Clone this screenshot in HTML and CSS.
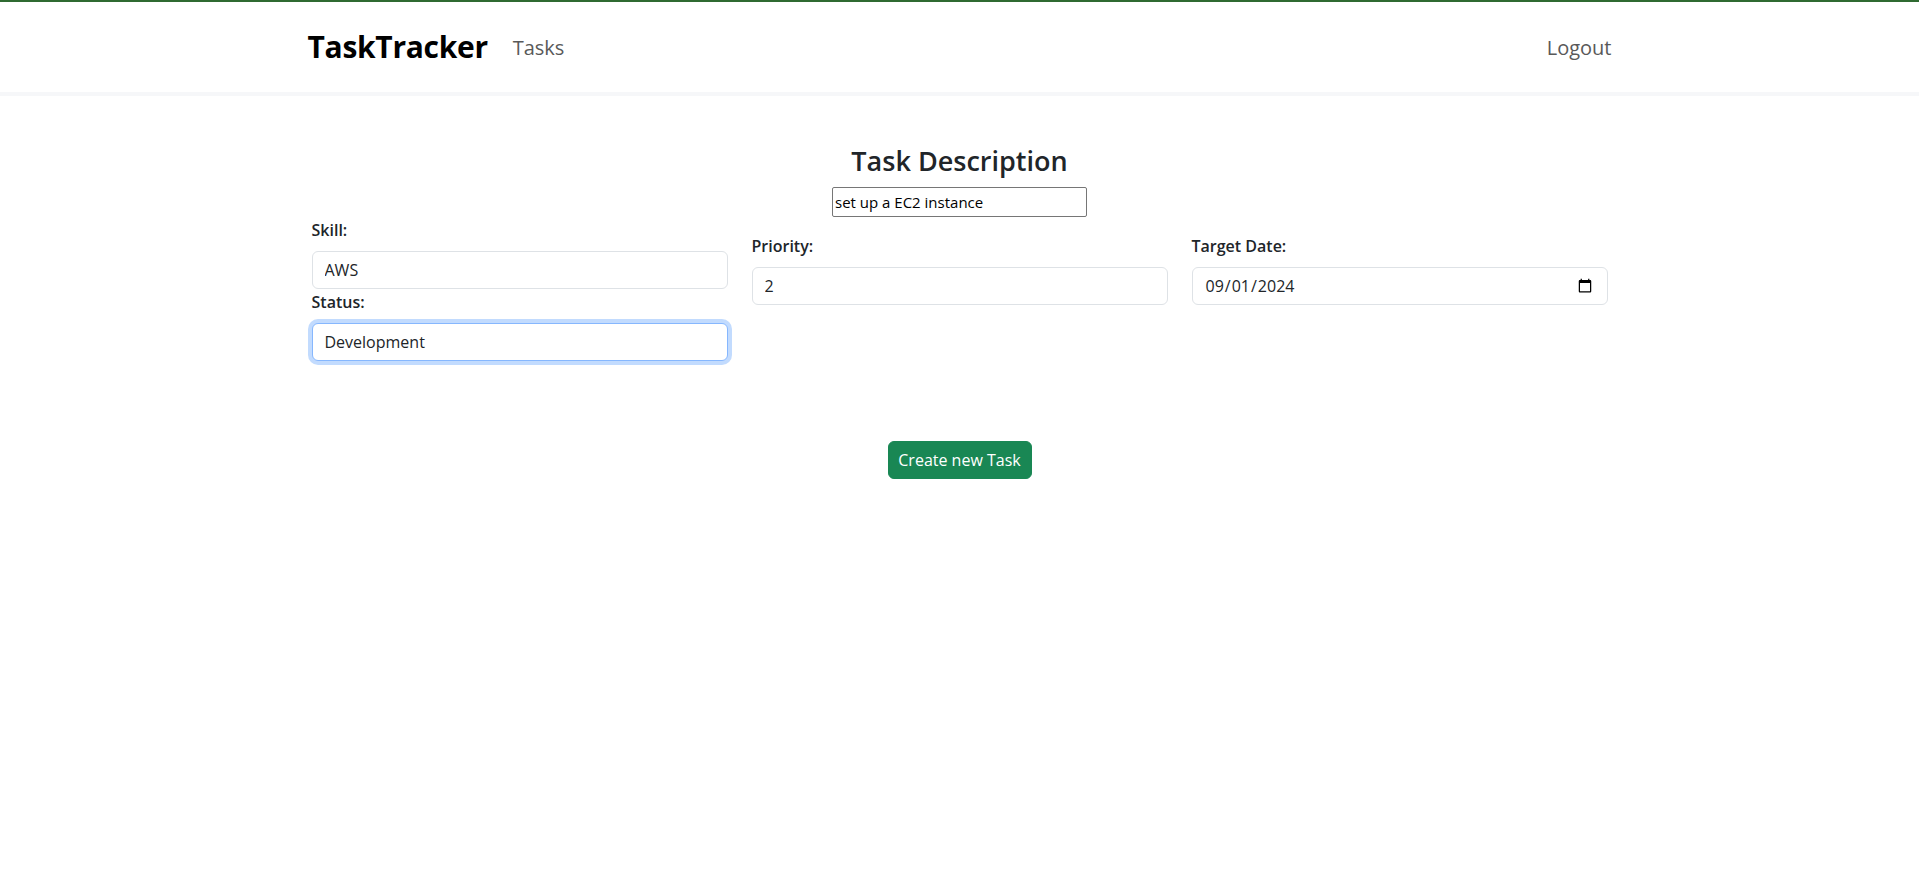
FILE: index.html
```html
<!DOCTYPE html>
<html lang="en">
<head>
<meta charset="utf-8">
<title>TaskTracker</title>
<link rel="stylesheet" href="styles.css">
</head>
<body>
<header class="topbar">
  <nav class="nav-inner">
    <a class="brand" href="#">TaskTracker</a>
    <a class="nav-link" href="#">Tasks</a>
    <a class="nav-link logout" href="#">Logout</a>
  </nav>
</header>
<main class="container">
  <section class="desc">
    <h3 class="desc-title">Task Description</h3>
    <input class="desc-input" type="text" value="set up a EC2 instance">
  </section>
  <div class="row">
    <div class="col">
      <label class="form-label">Skill:</label>
      <input class="form-control" type="text" value="AWS">
      <label class="form-label form-label-next">Status:</label>
      <input class="form-control focused" type="text" value="Development">
    </div>
    <div class="col col-offset">
      <label class="form-label">Priority:</label>
      <input class="form-control" type="text" value="2">
    </div>
    <div class="col col-offset">
      <label class="form-label">Target Date:</label>
      <input class="form-control" type="date" value="2024-09-01">
    </div>
  </div>
  <div class="actions">
    <button class="btn-success" type="button">Create new Task</button>
  </div>
</main>
</body>
</html>
```
FILE: styles.css
```css
* { box-sizing: border-box; }

body {
  margin: 0;
  font-family: "Open Sans", "Noto Sans", sans-serif;
  color: #212529;
  background: #fff;
}

.topbar {
  border-top: 2px solid #2f6a31;
  border-bottom: 4px solid #f6f7f9;
}

.nav-inner {
  width: 1304px;
  height: 90px;
  margin: 0 auto;
  display: flex;
  align-items: center;
}

.brand {
  font-size: 30px;
  font-weight: 700;
  line-height: 36px;
  color: #000;
  text-decoration: none;
  margin-right: 25px;
  letter-spacing: -0.3px;
}

.nav-link {
  font-size: 20px;
  line-height: 30px;
  color: #595959;
  text-decoration: none;
  margin-top: 2px;
}

.logout {
  margin-left: auto;
}

.container {
  width: 1320px;
  margin: 0 auto;
  padding: 48px 12px 0;
}

.desc {
  text-align: center;
}

.desc-title {
  margin: 0;
  font-size: 27px;
  font-weight: 600;
  line-height: 34px;
  color: #212529;
}

.desc-input {
  display: block;
  margin: 9px auto 0;
  width: 255px;
  height: 30px;
  padding: 1px 2px;
  font-family: inherit;
  font-size: 15px;
  color: #000;
  border: 1px solid #767676;
  border-radius: 2px;
  background: #fff;
}

.row {
  display: grid;
  grid-template-columns: repeat(3, 1fr);
  column-gap: 24px;
  margin-top: 1px;
  align-items: start;
}

.col {
  display: flex;
  flex-direction: column;
}

.col-offset {
  margin-top: 16px;
}

.form-label {
  display: block;
  font-size: 16px;
  font-weight: 600;
  line-height: 24px;
  margin-bottom: 9px;
  color: #212529;
}

.form-label-next {
  margin-top: 1px;
}

.form-control {
  display: block;
  width: 100%;
  height: 38px;
  padding: 6px 12px;
  font-family: inherit;
  font-size: 16px;
  line-height: 24px;
  color: #212529;
  background: #fff;
  border: 1px solid #dee2e6;
  border-radius: 6px;
  outline: none;
}

.form-control.focused {
  border-color: #86b7fe;
  box-shadow: 0 0 0 4px rgba(13, 110, 253, 0.25);
}

.actions {
  display: flex;
  justify-content: center;
  margin-top: 80px;
}

.btn-success {
  height: 38px;
  width: 144px;
  padding: 6px 8px;
  font-family: inherit;
  font-size: 16px;
  line-height: 24px;
  color: #fff;
  background: #198754;
  border: 1px solid #198754;
  border-radius: 6px;
  white-space: nowrap;
}
```
